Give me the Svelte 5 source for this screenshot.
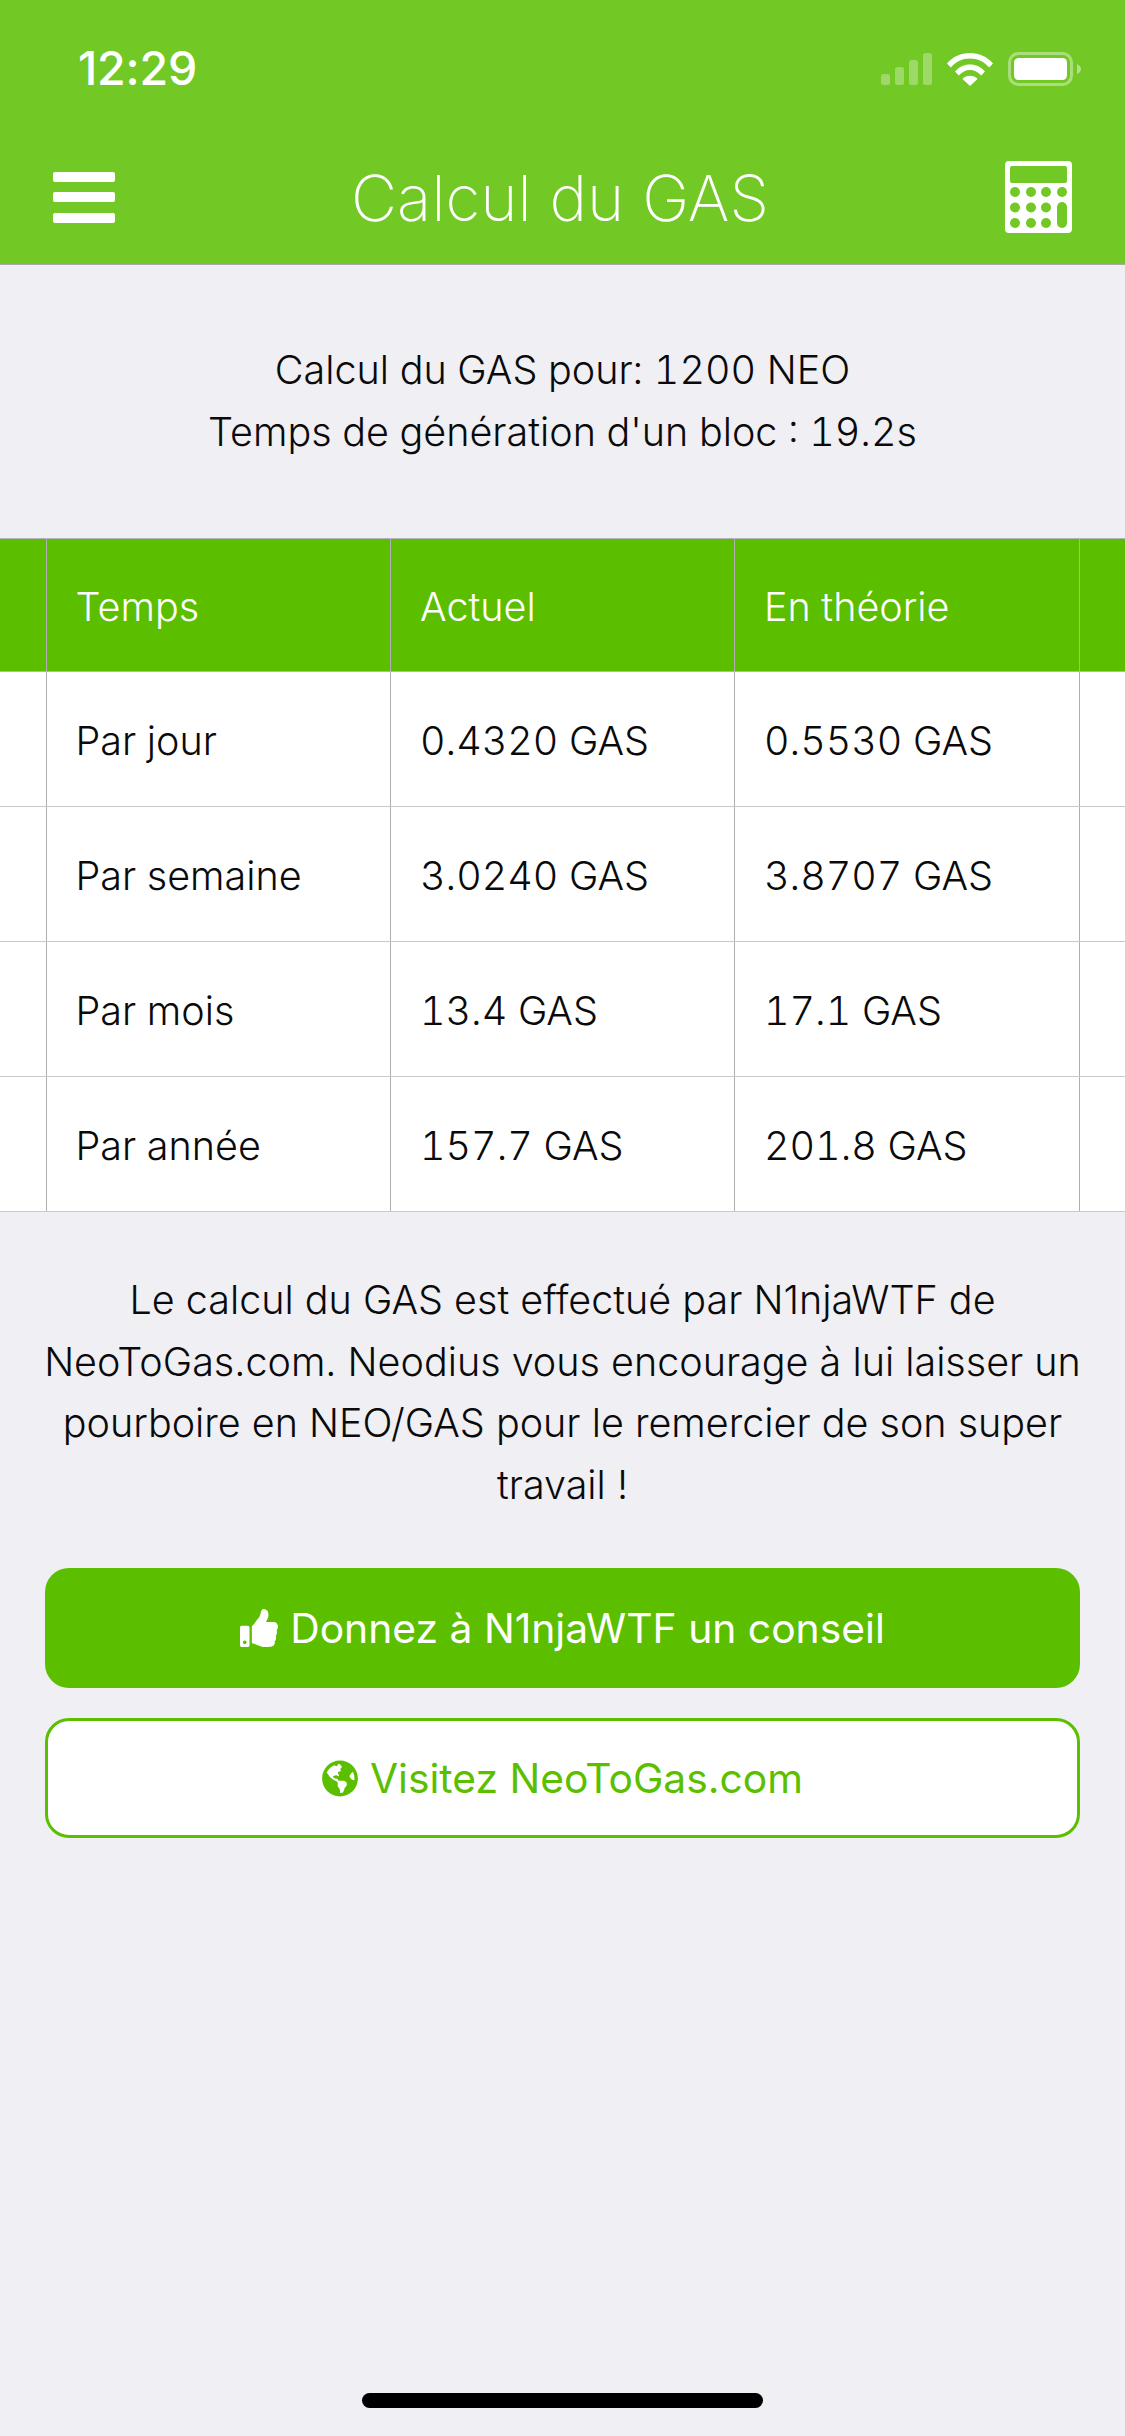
<script>
  const rows = [
    ["Par jour", "0.4320 GAS", "0.5530 GAS"],
    ["Par semaine", "3.0240 GAS", "3.8707 GAS"],
    ["Par mois", "13.4 GAS", "17.1 GAS"],
    ["Par année", "157.7 GAS", "201.8 GAS"]
  ];
</script>

<div class="page">
  <header class="top">
    <div class="status">
      <span class="time">12:29</span>
      <div class="status-icons">
        <svg class="signal" viewBox="0 0 51 32" fill="#fff" fill-opacity="0.3">
          <rect x="0" y="21" width="9" height="11" rx="2.5" />
          <rect x="14" y="14" width="9" height="18" rx="2.5" />
          <rect x="28" y="7" width="9" height="25" rx="2.5" />
          <rect x="42" y="0" width="9" height="32" rx="2.5" />
        </svg>
        <svg class="wifi" viewBox="0 0 46 34" fill="#fff">
          <path d="M0 11.5C6 4.5 14 1 23 1s17 3.500 23 10.500l-3.800 4C37 9.500 30.500 6.500 23 6.500S9 9.500 3.800 15.500z" />
          <path d="M8 19.500C12 15 17 12.500 23 12.500s11 2.500 15 7l-3.800 4C31 20 27.500 18 23 18s-8 2-11.200 5.500z" />
          <path d="M15.500 27c2-2 4.500-3.200 7.500-3.200s5.500 1.200 7.500 3.200L23 34z" />
        </svg>
        <svg class="battery" viewBox="0 0 73 34">
          <rect x="1.500" y="1.500" width="62" height="31" rx="9" fill="none" stroke="#fff" stroke-opacity="0.4" stroke-width="3" />
          <rect x="6" y="6" width="53" height="22" rx="4.500" fill="#fff" />
          <path d="M69 12c2.500 1 4 3 4 5s-1.500 4-4 5z" fill="#fff" fill-opacity="0.45" />
        </svg>
      </div>
    </div>
    <nav class="nav">
      <div class="burger"><span></span><span></span><span></span></div>
      <h1>Calcul du GAS</h1>
      <svg class="calc" viewBox="0 0 67 72">
        <path fill="#fff" fill-rule="evenodd" d="M4 0h59a4 4 0 0 1 4 4v64a4 4 0 0 1-4 4H4a4 4 0 0 1-4-4V4a4 4 0 0 1 4-4zM7 5a2 2 0 0 0-2 2v13a2 2 0 0 0 2 2h53a2 2 0 0 0 2-2V7a2 2 0 0 0-2-2z" />
        <g fill="#72c925">
          <circle cx="10" cy="31" r="5" /><circle cx="26" cy="31" r="5" /><circle cx="41" cy="31" r="5" /><circle cx="57" cy="31" r="5" />
          <circle cx="10" cy="46.500" r="5" /><circle cx="26" cy="46.500" r="5" /><circle cx="41" cy="46.500" r="5" />
          <circle cx="10" cy="62" r="5" /><circle cx="26" cy="62" r="5" /><circle cx="41" cy="62" r="5" />
          <rect x="52" y="41" width="10" height="26" rx="5" />
        </g>
      </svg>
    </nav>
  </header>

  <section class="intro">
    <p>Calcul du GAS pour: 1200 NEO</p>
    <p>Temps de génération d'un bloc : 19.2s</p>
  </section>

  <div class="table">
    <div class="row head">
      <div class="cell edge"></div>
      <div class="cell">Temps</div>
      <div class="cell">Actuel</div>
      <div class="cell">En théorie</div>
      <div class="cell end"></div>
    </div>
    {#each rows as row}
      <div class="row">
        <div class="cell edge"></div>
        {#each row as value}
          <div class="cell">{value}</div>
        {/each}
        <div class="cell end"></div>
      </div>
    {/each}
  </div>

  <p class="note">Le calcul du GAS est effectué par N1njaWTF de NeoToGas.com. Neodius vous encourage à lui laisser un pourboire en NEO/GAS pour le remercier de son super travail !</p>

  <div class="actions">
    <button class="btn solid">
      <svg class="thumb" viewBox="0 0 512 512" fill="currentColor"><path d="M104 224H24c-13.255 0-24 10.745-24 24v240c0 13.255 10.745 24 24 24h80c13.255 0 24-10.745 24-24V248c0-13.255-10.745-24-24-24zM64 472c-13.255 0-24-10.745-24-24s10.745-24 24-24 24 10.745 24 24-10.745 24-24 24zM384 81.452c0 42.416-25.97 66.208-33.277 94.548h101.723c33.397 0 59.397 27.746 59.553 58.098.084 17.938-7.546 37.249-19.439 49.197l-.11.11c9.836 23.337 8.237 56.037-9.308 79.469 8.681 25.895-.069 57.704-16.382 74.757 4.298 17.598 2.244 32.575-6.148 44.632C440.202 511.587 389.616 512 346.839 512l-2.845-.001c-48.287-.017-87.806-17.598-119.56-31.725-15.957-7.099-36.821-15.887-52.651-16.178-6.54-.12-11.783-5.457-11.783-11.998v-213.77c0-3.2 1.282-6.271 3.558-8.521 39.614-39.144 56.648-80.587 89.117-113.111 14.804-14.832 20.188-37.236 25.393-58.902C282.515 39.293 291.817 0 312 0c24 0 72 8 72 81.452z" /></svg>
      Donnez à N1njaWTF un conseil
    </button>
    <button class="btn outline">
      <svg class="globe" viewBox="0 0 496 512" fill="currentColor"><path d="M248 8C111.03 8 0 119.03 0 256s111.03 248 248 248 248-111.03 248-248S384.97 8 248 8zm82.29 357.6c-3.9 3.88-7.99 7.95-11.31 11.28-2.99 3-5.1 6.7-6.17 10.71-1.51 5.66-2.73 11.38-4.77 16.87l-17.39 46.85c-13.76 3-28 4.69-42.65 4.69v-27.38c1.69-12.62-7.64-36.26-22.63-51.25-6-6-9.37-14.14-9.37-22.63v-32.01c0-11.64-6.27-22.34-16.46-27.97-14.37-7.95-34.81-19.06-48.81-26.11-11.48-5.78-22.1-13.14-31.65-21.75l-.8-.72a114.792 114.792 0 0 1-18.06-20.74c-9.38-13.77-24.66-36.42-34.59-51.14 20.47-45.5 57.36-82.04 103.2-101.89l24.01 12.01C203.48 89.74 216 82.01 216 70.11v-11.3c7.99-1.29 16.12-2.11 24.45-2.42l28.3 28.3c6.25 6.25 6.25 16.38 0 22.63L264 112l-10.34 10.34c-3.12 3.12-3.12 8.19 0 11.31l4.69 4.69c3.12 3.12 3.12 8.19 0 11.31l-8 8a8.008 8.008 0 0 1-5.66 2.34h-8.99c-2.08 0-4.08.81-5.58 2.27l-9.92 9.65a8.008 8.008 0 0 0-1.58 9.31l15.59 31.19c2.66 5.32-1.21 11.58-7.15 11.58h-5.64c-1.93 0-3.79-.7-5.24-1.96l-9.28-8.06a16.017 16.017 0 0 0-15.55-3.1l-31.17 10.39a11.95 11.95 0 0 0-8.17 11.34c0 4.53 2.56 8.66 6.61 10.69l11.08 5.54c9.41 4.71 19.79 7.16 30.31 7.16s22.59 27.29 32 32h66.75c8.49 0 16.62 3.37 22.63 9.37l13.69 13.69a30.503 30.503 0 0 1 8.93 21.57 46.536 46.536 0 0 1-13.72 32.98zM417 274.25c-5.79-1.45-10.84-5-14.15-9.97l-17.98-26.97a23.97 23.97 0 0 1 0-26.62l19.59-29.38c2.32-3.47 5.5-6.29 9.24-8.15l12.98-6.49C440.2 193.59 448 223.87 448 256c0 8.67-.74 17.16-1.82 25.54L417 274.25z" /></svg>
      Visitez NeoToGas.com
    </button>
  </div>

  <div class="home-bar"></div>
</div>

<style>
  :global(body) {
    margin: 0;
    background: #efeff4;
  }

  .page {
    width: 1125px;
    height: 2436px;
    position: relative;
    background: #efeff4;
    font-family: "Inter", "Liberation Sans", sans-serif;
    font-weight: 300;
    color: #0a0a0a;
    overflow: hidden;
  }

  .top {
    height: 264px;
    background: #72c925;
    border-bottom: 1.5px solid #a9a9a9;
    color: #fff;
  }

  .status {
    height: 132px;
    display: flex;
    align-items: flex-start;
    justify-content: space-between;
    padding: 0 44px 0 78px;
  }

  .time {
    font-family: "Inter", sans-serif;
    font-weight: 500;
    font-size: 46.500px;
    line-height: 54px;
    margin-top: 41px;
    letter-spacing: -0.2px;
  }

  .status-icons {
    display: flex;
    align-items: flex-start;
    margin-top: 52px;
  }

  .signal {
    width: 51px;
    height: 32px;
    margin-top: 1px;
    margin-right: 15px;
  }

  .wifi {
    width: 46px;
    height: 34px;
    margin-right: 15px;
  }

  .battery {
    width: 73px;
    height: 34px;
  }

  .nav {
    height: 132px;
    display: flex;
    align-items: center;
    justify-content: space-between;
    padding: 0 53px 0 53px;
  }

  .burger {
    width: 62px;
    height: 51px;
    display: flex;
    flex-direction: column;
    justify-content: space-between;
    margin-top: -2px;
  }

  .burger span {
    height: 10px;
    background: #fff;
    border-radius: 2px;
  }

  h1 {
    margin: 0;
    font-weight: 200;
    font-size: 63.500px;
    line-height: 80px;
  }

  .calc {
    width: 67px;
    height: 72px;
    margin-top: -3px;
  }

  .intro {
    height: 273px;
    padding-top: 74px;
    box-sizing: border-box;
    text-align: center;
    font-size: 39.500px;
    line-height: 62px;
    font-variant-numeric: tabular-nums;
  }

  .intro p {
    margin: 0;
  }

  .table {
    background: #fff;
    font-size: 39.500px;
    font-variant-numeric: tabular-nums;
    border-top: 1.5px solid #b5b5b5;
  }

  .row {
    display: grid;
    grid-template-columns: 46.500px 344.500px 344px 345px 1fr;
    height: 135px;
    border-bottom: 1.5px solid #c8c8c8;
    box-sizing: border-box;
  }

  .row.head {
    height: 133px;
    background: #5bbf00;
    color: #fff;
    border-bottom-color: #b5b5b5;
  }

  .cell {
    display: flex;
    align-items: center;
    padding-left: 29px;
    padding-top: 3px;
    border-right: 1.5px solid #b0b0b0;
    box-sizing: border-box;
  }

  .cell.end {
    border-right: none;
  }

  .note {
    margin: 0;
    padding: 58px 38px 0;
    text-align: center;
    font-size: 39.500px;
    line-height: 61.500px;
  }

  .actions {
    display: flex;
    flex-direction: column;
    gap: 30px;
    padding: 0 45px;
    margin-top: 52px;
  }

  .btn {
    height: 120px;
    border-radius: 24px;
    display: flex;
    align-items: center;
    justify-content: center;
    gap: 12px;
    font-family: "Inter", sans-serif;
    font-weight: 400;
    font-size: 40.800px;
    box-sizing: border-box;
    padding: 0;
  }

  .solid {
    background: #5bbf00;
    border: none;
    color: #fff;
  }

  .outline {
    background: #fff;
    border: 3px solid #5bbf00;
    color: #5bbf00;
  }

  .thumb {
    width: 38px;
    height: 38px;
  }

  .globe {
    width: 36px;
    height: 37px;
  }

  .home-bar {
    position: absolute;
    left: 362px;
    bottom: 28px;
    width: 401px;
    height: 15px;
    border-radius: 8px;
    background: #000;
  }
</style>
